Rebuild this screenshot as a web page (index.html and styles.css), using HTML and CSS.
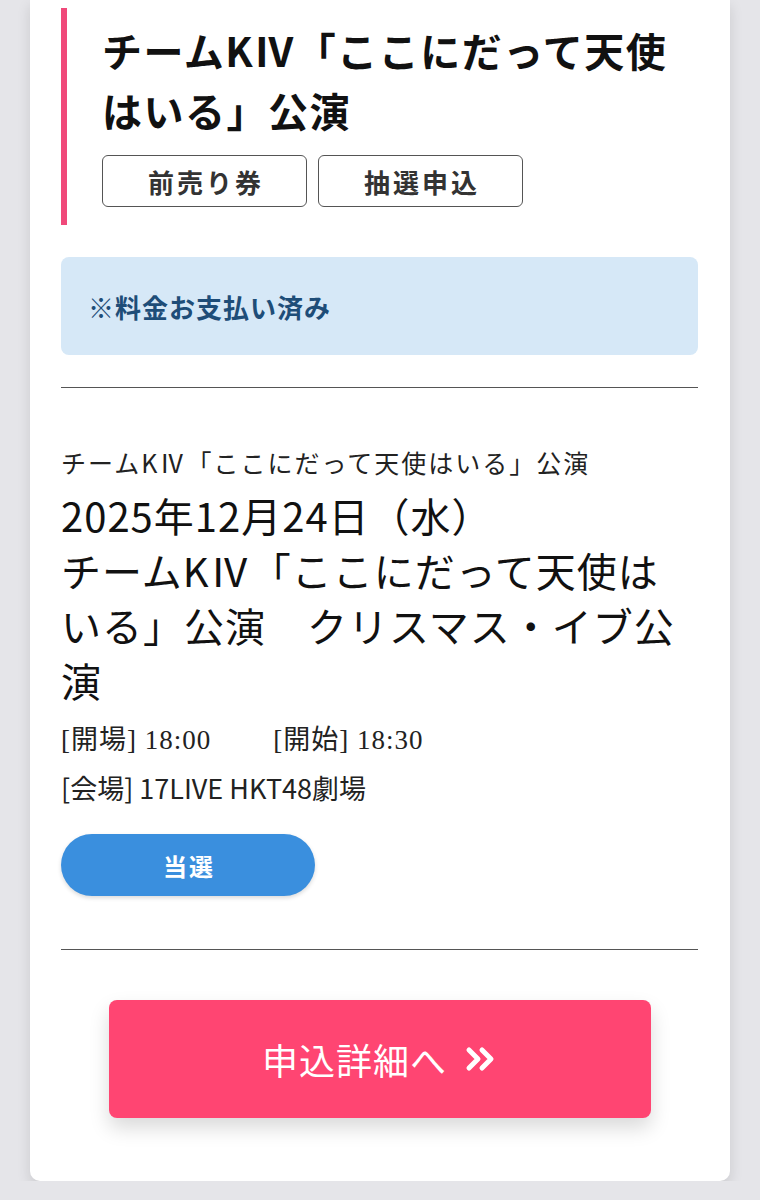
FILE: index.html
```html
<!DOCTYPE html>
<html lang="ja">
<head>
    <meta charset="UTF-8">
    <meta name="viewport" content="width=device-width, initial-scale=1.0">
    <title>申込履歴</title>
    <link rel="stylesheet" href="styles.css">
</head>
<body>
    <div class="card">
        <div class="head">
            <h1 class="headTitle">チームKⅣ「ここにだって天使はいる」公演</h1>
            <div class="tags">
                <span class="tag">前売り券</span>
                <span class="tag">抽選申込</span>
            </div>
        </div>

        <div class="notice">※料金お支払い済み</div>

        <hr class="line">

        <div class="detail">
            <p class="detailName">チームKⅣ「ここにだって天使はいる」公演</p>
            <p class="detailMain">2025年12月24日（水）<br>チームKⅣ「ここにだって天使はいる」公演　クリスマス・イブ公演</p>
            <p class="time"><span>[開場] 18:00</span><span>[開始] 18:30</span></p>
            <p class="place">[会場] 17LIVE HKT48劇場</p>
            <div class="status">当選</div>
        </div>

        <hr class="line">

        <a class="detailBtn" href="#">
            申込詳細へ
            <svg class="arrows" width="32" height="26" viewBox="0 0 32 26">
                <path d="M4 4 L13 13 L4 22" />
                <path d="M17 4 L26 13 L17 22" />
            </svg>
        </a>
    </div>
</body>
</html>
```

FILE: styles.css
```css
*{
    margin: 0;
    padding: 0;
    box-sizing: border-box;
}
body{
    background: #e5e5e9;
    font-family: "Noto Sans CJK JP", "Noto Sans", sans-serif;
    color: #111;
}
.card{
    width: 700px;
    margin-left: 30px;
    background: #fff;
    border-radius: 0 0 10px 10px;
    box-shadow: 0 6px 14px rgba(0, 0, 0, 0.12);
    padding: 8px 32px 63px 31px;
}

/* header with pink bar */
.head{
    border-left: 6px solid #f0497a;
    padding: 12px 0 18px 35px;
}
.headTitle{
    font-size: 40px;
    font-weight: 700;
    line-height: 60px;
    letter-spacing: 1.5px;
}
.tags{
    display: flex;
    gap: 11px;
    margin-top: 15px;
}
.tag{
    width: 205px;
    height: 52px;
    border: 1.5px solid #555;
    border-radius: 6px;
    display: flex;
    align-items: center;
    justify-content: center;
    padding-left: 3px;
    font-size: 26px;
    font-weight: 700;
    letter-spacing: 3px;
    color: #333;
}

.notice{
    margin-top: 32px;
    height: 98px;
    background: #d6e8f7;
    border-radius: 8px;
    padding-left: 27px;
    display: flex;
    align-items: center;
    font-size: 26px;
    font-weight: 700;
    color: #1e4d78;
    letter-spacing: 1px;
}

.line{
    border: 0;
    border-top: 1.5px solid #555;
    margin-top: 32px;
}

/* performance detail */
.detail{
    padding-top: 54px;
}
.detailName{
    font-size: 25px;
    line-height: 40px;
    letter-spacing: 2px;
    color: #222;
}
.detailMain{
    margin-top: 6px;
    padding-right: 10px;
    font-size: 40px;
    line-height: 55px;
    letter-spacing: 1px;
}
.time,
.place{
    font-size: 27px;
    line-height: 48px;
    color: #222;
}
.time{
    margin-top: 8px;
    letter-spacing: 1px;
    font-family: "Liberation Serif", "Noto Sans CJK JP", serif;
}
.time span + span{
    margin-left: 62px;
}
.status{
    margin-top: 22px;
    width: 254px;
    height: 62px;
    border-radius: 31px;
    background: #3a8fde;
    box-shadow: 0 2px 4px rgba(0, 0, 0, 0.15);
    color: #fff;
    font-size: 24px;
    font-weight: 700;
    letter-spacing: 2px;
    padding-left: 2px;
    display: flex;
    align-items: center;
    justify-content: center;
}
.detail + .line{
    margin-top: 53px;
}

.detailBtn{
    display: flex;
    align-items: center;
    justify-content: center;
    gap: 18px;
    width: 542px;
    height: 118px;
    margin: 50px auto 0;
    background: #ff4572;
    border-radius: 8px;
    box-shadow: 0 10px 20px rgba(0, 0, 0, 0.15);
    color: #fff;
    font-size: 36px;
    letter-spacing: 1px;
    text-decoration: none;
}
.arrows path{
    fill: none;
    stroke: #fff;
    stroke-width: 5;
    stroke-linecap: round;
    stroke-linejoin: round;
}
```
